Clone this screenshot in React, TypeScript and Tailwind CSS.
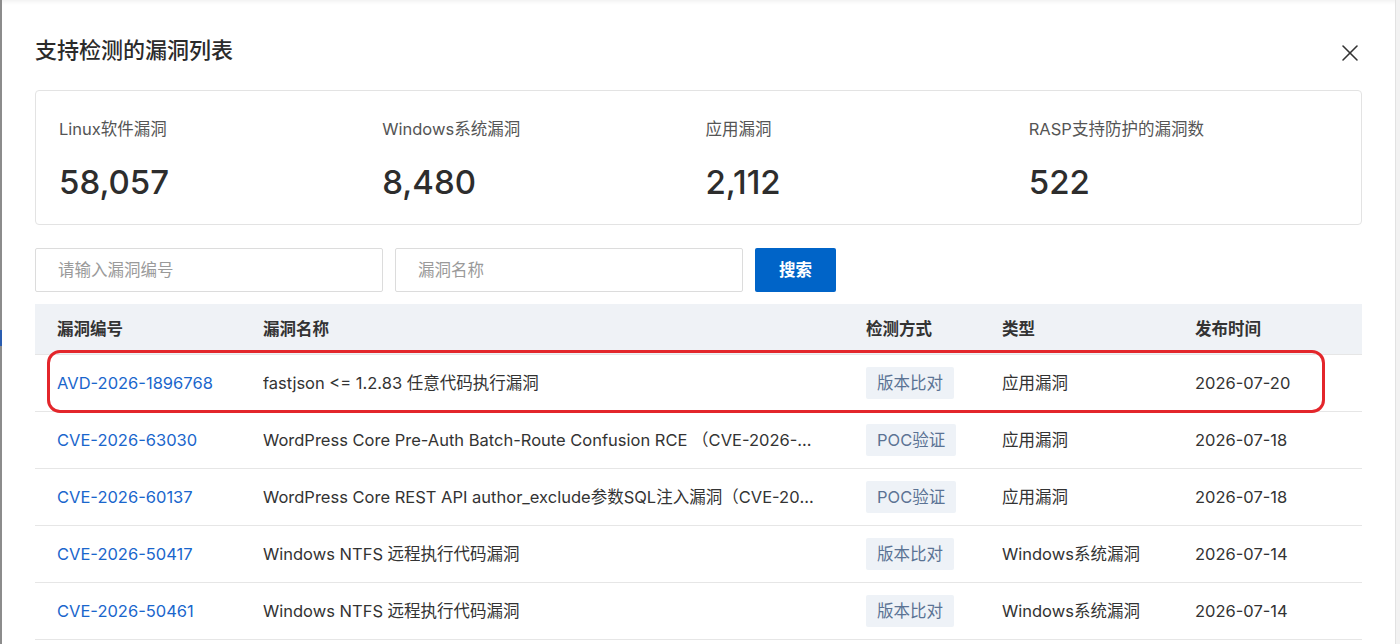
import { X } from "lucide-react";

type Row = { id: string; name: string; method: string; kind: string; date: string };

const stats = [
  { label: "Linux软件漏洞", value: "58,057" },
  { label: "Windows系统漏洞", value: "8,480" },
  { label: "应用漏洞", value: "2,112" },
  { label: "RASP支持防护的漏洞数", value: "522" },
];

const rows: Row[] = [
  { id: "AVD-2026-1896768", name: "fastjson <= 1.2.83 任意代码执行漏洞", method: "版本比对", kind: "应用漏洞", date: "2026-07-20" },
  { id: "CVE-2026-63030", name: "WordPress Core Pre-Auth Batch-Route Confusion RCE （CVE-2026-63030）", method: "POC验证", kind: "应用漏洞", date: "2026-07-18" },
  { id: "CVE-2026-60137", name: "WordPress Core REST API author_exclude参数SQL注入漏洞（CVE-2026-60137）", method: "POC验证", kind: "应用漏洞", date: "2026-07-18" },
  { id: "CVE-2026-50417", name: "Windows NTFS 远程执行代码漏洞", method: "版本比对", kind: "Windows系统漏洞", date: "2026-07-14" },
  { id: "CVE-2026-50461", name: "Windows NTFS 远程执行代码漏洞", method: "版本比对", kind: "Windows系统漏洞", date: "2026-07-14" },
];

const cols = "grid grid-cols-[228px_603px_136px_193px_1fr] items-center";

export default function App() {
  return (
    <div className="flex h-[644px] w-[1400px] overflow-hidden bg-[#f2f2f2] font-['Inter','Noto_Sans_CJK_SC',sans-serif] text-[#333]">
      {/* edge of the page behind the dialog */}
      <div className="w-[2px] shrink-0 bg-[#8c8c8c]">
        <div className="mt-[330px] h-[16px] bg-[#2a5db0]" />
      </div>
      <main className="flex w-[1394px] shrink-0 flex-col border-r border-[#e2e2e2] bg-white pl-[33px] pr-[33px] shadow-[inset_0_5px_5px_-4px_rgba(0,0,0,0.08)]">
        <div className="flex h-[64px] items-start justify-between pt-[36px]">
          <h1 className="text-[22px] leading-[28px] font-medium text-[#2b2b2b]">支持检测的漏洞列表</h1>
          <button className="mr-[-2px] mt-[3px] text-[#333]"><X size={28} strokeWidth={1.3} /></button>
        </div>

        <div className="mt-[26px] grid h-[135px] grid-cols-4 rounded-[4px] border border-[#e3e3e3] pl-[23px] pr-[9px] pt-[27px]">
          {stats.map(s => (
            <div key={s.label}>
              <p className="text-[16.5px] leading-[22px] text-[#555]">{s.label}</p>
              <p className="mt-[22px] text-[33px] leading-[40px] font-medium text-[#2d2d2d]">{s.value}</p>
            </div>
          ))}
        </div>

        <div className="mt-[23px] flex gap-[12px]">
          <input placeholder="请输入漏洞编号" className="h-[44px] w-[348px] rounded-[2px] border border-[#dcdcdc] px-[22px] text-[16.5px] placeholder:text-[#9a9a9a] focus:outline-none" />
          <input placeholder="漏洞名称" className="h-[44px] w-[348px] rounded-[2px] border border-[#dcdcdc] px-[22px] text-[16.5px] placeholder:text-[#9a9a9a] focus:outline-none" />
          <button className="h-[44px] w-[81px] rounded-[2px] bg-[#0064c8] text-[16.5px] font-bold text-white">搜索</button>
        </div>

        <div className="mt-[12px] w-[1327px]">
          <div className={`${cols} h-[51px] border-b border-[#e6e6e6] bg-[#eff2f6] text-[16.5px] font-bold`}>
            <span className="pl-[22px]">漏洞编号</span>
            <span>漏洞名称</span>
            <span>检测方式</span>
            <span>类型</span>
            <span>发布时间</span>
          </div>
          {rows.map((r, i) => (
            <div key={r.id} className={`${cols} relative h-[57px] border-b border-[#e6e6e6] text-[16.5px]`}>
              <span className="pl-[22px] text-[#1a66cc]">{r.id}</span>
              <span className="mr-[48px] truncate">{r.name}</span>
              <span>
                <span className="inline-block rounded-[2px] bg-[#eef2f7] px-[11px] py-[5px] leading-[22px] text-[#5b7394]">{r.method}</span>
              </span>
              <span>{r.kind}</span>
              <span>{r.date}</span>
              {i === 0 && (
                <div className="pointer-events-none absolute left-[12px] top-[-5px] h-[63px] w-[1278px] rounded-[13px] border-[3px] border-[#e3262b]" />
              )}
            </div>
          ))}
        </div>
      </main>
    </div>
  );
}
